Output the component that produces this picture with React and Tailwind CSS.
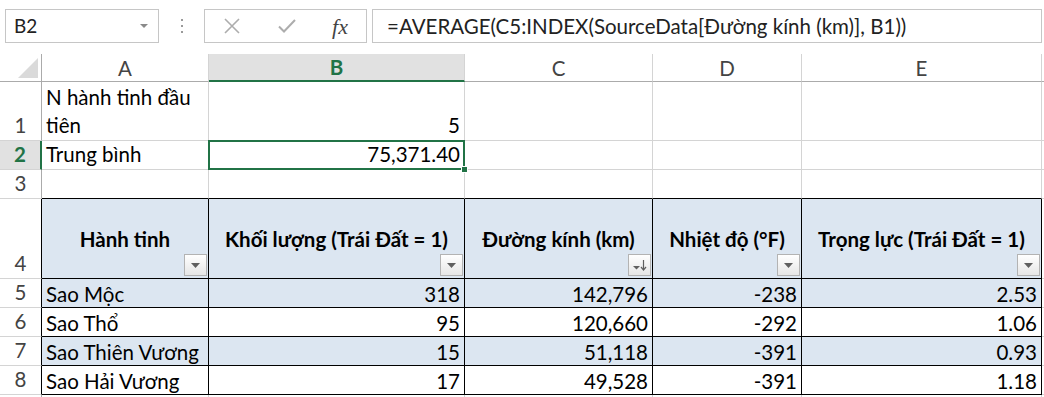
import React from "react";

const planets = [
  { row: 5, name: "Sao Mộc", mass: "318", diameter: "142,796", temp: "-238", gravity: "2.53" },
  { row: 6, name: "Sao Thổ", mass: "95", diameter: "120,660", temp: "-292", gravity: "1.06" },
  { row: 7, name: "Sao Thiên Vương", mass: "15", diameter: "51,118", temp: "-391", gravity: "0.93" },
  { row: 8, name: "Sao Hải Vương", mass: "17", diameter: "49,528", temp: "-391", gravity: "1.18" },
];

const FilterButton = ({ sorted }) => (
  <div className="absolute right-[1px] bottom-[2px] w-[23px] h-[22px] border border-[#b3b3b3] bg-linear-to-b from-white to-[#e6e6e6] flex items-center justify-center">
    {sorted ? (
      <svg width="17" height="14" viewBox="0 0 17 14">
        <path d="M2 8h7l-3.5 3.5z" fill="#5f5f5f" />
        <path d="M12.5 2v9" stroke="#5f5f5f" strokeWidth="1.2" />
        <path d="M10 9l2.5 3 2.5-3" stroke="#5f5f5f" strokeWidth="1.2" fill="none" />
      </svg>
    ) : (
      <svg width="9" height="5" viewBox="0 0 9 5">
        <path d="M0 0h9L4.5 5z" fill="#5f5f5f" />
      </svg>
    )}
  </div>
);

const RowHead = ({ n, dark }) => (
  <div
    className={`flex items-end justify-center pb-[1px] border-b border-[#d4d4d4] text-[#444] ${
      dark ? "border-r border-r-black" : "border-r border-r-[#ababab]"
    }`}
  >
    {n}
  </div>
);

const ColHead = ({ label, selected }) =>
  selected ? (
    <div className="flex items-center justify-center bg-[#e1e1e1] border-r border-r-[#d4d4d4] border-b-2 border-b-[#217346] text-[#217346] font-bold">
      {label}
    </div>
  ) : (
    <div className="flex items-center justify-center bg-white border-r border-r-[#d4d4d4] border-b border-b-[#ababab] text-[#444]">
      {label}
    </div>
  );

export default function App() {
  return (
    <div className="w-[1044px] h-[397px] overflow-hidden bg-white text-black font-['Lato',sans-serif] text-[20.5px]">
      {/* Formula bar */}
      <div className="h-[54px] flex items-start pt-[9px]">
        <div className="ml-[5px] w-[154px] h-[34px] border border-[#c6c6c6] flex items-center justify-between pl-[8px] pr-[10px]">
          <span className="text-[#222] text-[19px]">B2</span>
          <svg width="8" height="4" viewBox="0 0 8 4">
            <path d="M0 0h8L4 4z" fill="#8a8a8a" />
          </svg>
        </div>
        <div className="w-[45px] h-[34px] flex flex-col items-center justify-center gap-[4px]">
          <span className="w-[2px] h-[2px] bg-[#9a9a9a]" />
          <span className="w-[2px] h-[2px] bg-[#9a9a9a]" />
          <span className="w-[2px] h-[2px] bg-[#9a9a9a]" />
        </div>
        <div className="w-[163px] h-[34px] border border-[#c6c6c6] flex items-center">
          <div className="w-[54px] flex justify-center">
            <svg width="16" height="16" viewBox="0 0 16 16">
              <path d="M1 1l14 14M15 1L1 15" stroke="#adadad" strokeWidth="1.6" />
            </svg>
          </div>
          <div className="w-[56px] flex justify-center">
            <svg width="18" height="14" viewBox="0 0 18 14">
              <path d="M1 7.5l5 5L17 1" stroke="#adadad" strokeWidth="2" fill="none" />
            </svg>
          </div>
          <div className="w-[50px] flex justify-center font-['Liberation_Serif',serif] italic text-[22px] text-[#444]">
            fx
          </div>
        </div>
        <div className="ml-[5px] w-[670px] h-[34px] border border-[#c6c6c6] flex items-center pl-[14px] text-[#222]">
          =AVERAGE(C5:INDEX(SourceData[Đường kính (km)], B1))
        </div>
      </div>

      {/* Sheet grid */}
      <div className="grid grid-cols-[42px_167px_256px_188px_149px_240px_2px] grid-rows-[28px_59px_29px_29px_80px_29px_29px_29px_29px_2px] leading-[28px]">
        {/* Column headers */}
        <div className="relative bg-white border-r border-r-[#ababab] border-b border-b-[#ababab]">
          <svg className="absolute right-[3px] bottom-[3px]" width="20" height="20" viewBox="0 0 20 20">
            <path d="M20 0v20H0z" fill="#dadada" />
          </svg>
        </div>
        <ColHead label="A" />
        <ColHead label="B" selected />
        <ColHead label="C" />
        <ColHead label="D" />
        <ColHead label="E" />
        <div className="bg-white border-b border-b-[#ababab]" />

        {/* Row 1 */}
        <RowHead n={1} />
        <div className="flex flex-col justify-end px-[4px] pb-[1px] border-r border-b border-[#d4d4d4]">
          <span>N hành tinh đầu</span>
          <span>tiên</span>
        </div>
        <div className="flex items-end justify-end px-[4px] pb-[1px] border-r border-b border-[#d4d4d4]">5</div>
        <div className="border-r border-b border-[#d4d4d4]" />
        <div className="border-r border-b border-[#d4d4d4]" />
        <div className="border-r border-b border-[#d4d4d4]" />
        <div className="border-b border-[#d4d4d4]" />

        {/* Row 2 */}
        <div className="flex items-end justify-center pb-[1px] bg-[#e1e1e1] border-r-2 border-r-[#217346] border-b border-b-[#d4d4d4] text-[#217346] font-bold">
          2
        </div>
        <div className="flex items-end px-[4px] pb-[1px] border-r border-b border-[#d4d4d4]">Trung bình</div>
        <div className="relative flex items-end justify-end px-[4px] pb-[1px] border-r border-b border-[#d4d4d4]">
          75,371.40
          <div className="absolute -left-[1px] -top-[1px] -right-[1px] -bottom-[1px] border-2 border-[#217346]" />
          <div className="absolute -right-[4px] -bottom-[4px] w-[7px] h-[7px] bg-[#217346] border border-white" />
        </div>
        <div className="border-r border-b border-[#d4d4d4]" />
        <div className="border-r border-b border-[#d4d4d4]" />
        <div className="border-r border-b border-[#d4d4d4]" />
        <div className="border-b border-[#d4d4d4]" />

        {/* Row 3 */}
        <RowHead n={3} />
        <div className="border-r border-r-[#d4d4d4] border-b border-b-black" />
        <div className="border-r border-r-[#d4d4d4] border-b border-b-black" />
        <div className="border-r border-r-[#d4d4d4] border-b border-b-black" />
        <div className="border-r border-r-[#d4d4d4] border-b border-b-black" />
        <div className="border-r border-r-[#d4d4d4] border-b border-b-black" />
        <div className="border-b border-[#d4d4d4]" />

        {/* Row 4: table header */}
        <RowHead n={4} dark />
        <div className="relative flex items-center justify-center bg-[#dce6f1] border-r border-b border-black font-bold">
          Hành tinh
          <FilterButton />
        </div>
        <div className="relative flex items-center justify-center bg-[#dce6f1] border-r border-b border-black font-bold">
          Khối lượng (Trái Đất = 1)
          <FilterButton />
        </div>
        <div className="relative flex items-center justify-center bg-[#dce6f1] border-r border-b border-black font-bold">
          Đường kính (km)
          <FilterButton sorted />
        </div>
        <div className="relative flex items-center justify-center bg-[#dce6f1] border-r border-b border-black font-bold">
          Nhiệt độ (°F)
          <FilterButton />
        </div>
        <div className="relative flex items-center justify-center bg-[#dce6f1] border-r border-b border-black font-bold">
          Trọng lực (Trái Đất = 1)
          <FilterButton />
        </div>
        <div className="border-b border-[#d4d4d4]" />

        {/* Data rows */}
        {planets.map((p, i) => {
          const bg = i % 2 === 0 ? "bg-[#dce6f1]" : "bg-white";
          return (
            <React.Fragment key={p.row}>
              <RowHead n={p.row} dark />
              <div className={`flex items-center px-[4px] pt-[2px] border-r border-b border-black ${bg}`}>{p.name}</div>
              <div className={`flex items-center justify-end px-[4px] pt-[2px] border-r border-b border-black ${bg}`}>{p.mass}</div>
              <div className={`flex items-center justify-end px-[4px] pt-[2px] border-r border-b border-black ${bg}`}>{p.diameter}</div>
              <div className={`flex items-center justify-end px-[4px] pt-[2px] border-r border-b border-black ${bg}`}>{p.temp}</div>
              <div className={`flex items-center justify-end px-[4px] pt-[2px] border-r border-b border-black ${bg}`}>{p.gravity}</div>
              <div className="border-b border-[#d4d4d4]" />
            </React.Fragment>
          );
        })}

        {/* Row 9 (cut off) */}
        <div className="border-r border-[#ababab]" />
        <div className="border-r border-[#d4d4d4]" />
        <div className="border-r border-[#d4d4d4]" />
        <div className="border-r border-[#d4d4d4]" />
        <div className="border-r border-[#d4d4d4]" />
        <div className="border-r border-[#d4d4d4]" />
        <div />
      </div>
    </div>
  );
}
